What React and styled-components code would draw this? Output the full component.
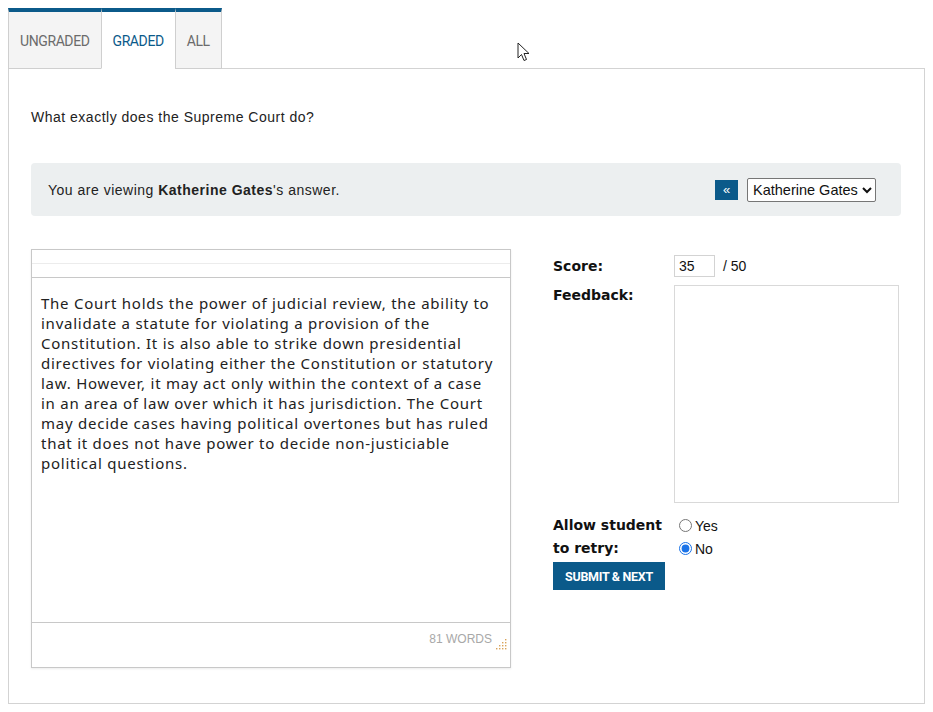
import React from 'react';
import styled, { createGlobalStyle } from 'styled-components';

const Global = createGlobalStyle`
  body {
    margin: 8px;
    background: #ffffff;
    font-family: "Liberation Sans", Arial, sans-serif;
    color: #222;
  }
`;

const BLUE = '#0b5a8a';

const Page = styled.div`
  position: relative;
  width: 917px;
`;

const Tabs = styled.div`
  display: flex;
  position: relative;
  z-index: 1;
`;

const Tab = styled.div`
  box-sizing: border-box;
  height: 61px;
  padding: 1px 11px 0;
  display: flex;
  align-items: center;
  border-top: 4px solid ${BLUE};
  border-left: 1px solid #cfcfcf;
  border-right: ${p => (p.$last ? '1px solid #cfcfcf' : 'none')};
  border-bottom: 1px solid ${p => (p.$active ? '#ffffff' : '#cfcfcf')};
  margin-bottom: -1px;
  background: ${p => (p.$active ? '#ffffff' : '#f4f4f4')};
  color: ${p => (p.$active ? BLUE : '#6b6b6b')};
  font-family: Roboto, sans-serif;
  font-size: 14px;
  letter-spacing: -0.4px;
  text-transform: uppercase;
  cursor: pointer;
`;

const Panel = styled.div`
  border: 1px solid #d3d3d3;
  padding: 40px 23px 35px 22px;
`;

const Question = styled.p`
  margin: 0;
  font-size: 14px;
  line-height: 16px;
  letter-spacing: 0.5px;
`;

const Banner = styled.div`
  margin-top: 38px;
  height: 53px;
  background: #eceff0;
  border-radius: 4px;
  display: flex;
  align-items: center;
  justify-content: space-between;
  padding: 0 25px 0 17px;
  font-size: 14px;
`;

const Viewing = styled.span`
  letter-spacing: 0.5px;
`;

const Picker = styled.div`
  display: flex;
  align-items: center;
  gap: 9px;
`;

const PrevButton = styled.button`
  width: 23px;
  height: 20px;
  border: none;
  padding: 0;
  background: ${BLUE};
  color: #fff;
  font-size: 13px;
  line-height: 20px;
  cursor: pointer;
`;

const Select = styled.select`
  height: 24px;
  font-family: "Liberation Sans", Arial, sans-serif;
  font-size: 14.5px;
  color: #111;
  border: 1px solid #767676;
  border-radius: 2px;
  background: #fff;
  padding: 0 1px;
`;

const Work = styled.div`
  margin-top: 34px;
  display: flex;
  align-items: flex-start;
  gap: 42px;
`;

const Editor = styled.div`
  width: 478px;
  height: 417px;
  border: 1px solid #c8c8c8;
  box-shadow: 0 1px 2px rgba(0, 0, 0, 0.08);
  display: flex;
  flex-direction: column;
  margin-top: -1px;
`;

const ToolRow = styled.div`
  height: 13px;
  border-bottom: 1px solid ${p => (p.$dark ? '#c8c8c8' : '#ececec')};
`;

const Answer = styled.div`
  flex: 1;
  padding: 15px 10px 0 9px;
  font-family: "Noto Sans", sans-serif;
  font-size: 15px;
  letter-spacing: 0.75px;
  line-height: 20px;
  color: #222;
`;

const Footer = styled.div`
  position: relative;
  height: 45px;
  border-top: 1px solid #c8c8c8;
  display: flex;
  justify-content: flex-end;
  padding: 9px 18px 0 0;
  box-sizing: border-box;
  font-family: "Liberation Sans", Arial, sans-serif;
  font-size: 12px;
  color: #a8a8a8;
`;

const Grip = styled.svg`
  position: absolute;
  right: 3px;
  bottom: 17px;
`;

const Form = styled.div`
  display: grid;
  grid-template-columns: 121px auto;
  align-items: start;
  font-family: "DejaVu Sans", Verdana, sans-serif;
  font-size: 14px;
  color: #111;
  padding-top: 5px;
`;

const Label = styled.div`
  font-weight: bold;
  line-height: 23px;
  margin-top: ${p => p.$top || 0}px;
`;

const ScoreCell = styled.div`
  display: flex;
  align-items: center;
  gap: 8px;
  font-family: "Liberation Sans", Arial, sans-serif;
  font-size: 14px;
`;

const ScoreInput = styled.input`
  width: 41px;
  height: 22px;
  box-sizing: border-box;
  border: 1px solid #d3d3d3;
  padding: 0 4px;
  font-family: "Liberation Sans", Arial, sans-serif;
  font-size: 14px;
  color: #111;
`;

const Feedback = styled.textarea`
  margin-top: 7px;
  width: 225px;
  height: 218px;
  box-sizing: border-box;
  border: 1px solid #d9d9d9;
  resize: none;
`;

const Radios = styled.div`
  margin-top: 11px;
  display: flex;
  flex-direction: column;
  padding-left: 5px;
`;

const RadioRow = styled.label`
  display: flex;
  align-items: center;
  gap: 3px;
  height: 23px;
  font-family: "Liberation Sans", Arial, sans-serif;
  font-size: 14px;
  input {
    margin: 0;
    width: 13px;
    height: 13px;
    accent-color: #1a73e8;
  }
`;

const Submit = styled.button`
  grid-column: 1 / span 2;
  justify-self: start;
  margin-top: 2px;
  width: 112px;
  height: 28px;
  padding: 0;
  border: none;
  background: ${BLUE};
  color: #fff;
  font-family: Roboto, sans-serif;
  font-weight: bold;
  font-size: 12.5px;
  letter-spacing: -0.3px;
  white-space: nowrap;
  text-transform: uppercase;
  cursor: pointer;
`;

const Cursor = styled.svg`
  position: absolute;
  left: 509px;
  top: 34px;
`;

const answerText =
  'The Court holds the power of judicial review, the ability to invalidate a statute for violating a provision of the Constitution. It is also able to strike down presidential directives for violating either the Constitution or statutory law. However, it may act only within the context of a case in an area of law over which it has jurisdiction. The Court may decide cases having political overtones but has ruled that it does not have power to decide non-justiciable political questions.';

const gripDots = [
  [10, 1], [10, 4], [7, 4], [10, 7], [7, 7], [4, 7], [10, 10], [7, 10], [4, 10], [1, 10],
];

export default function App() {
  return (
    <Page>
      <Global />
      <Tabs>
        <Tab>Ungraded</Tab>
        <Tab $active>Graded</Tab>
        <Tab $last>All</Tab>
      </Tabs>
      <Panel>
        <Question>What exactly does the Supreme Court do?</Question>
        <Banner>
          <Viewing>
            You are viewing <b>Katherine Gates</b>'s answer.
          </Viewing>
          <Picker>
            <PrevButton>«</PrevButton>
            <Select defaultValue="kg">
              <option value="kg">Katherine Gates</option>
            </Select>
          </Picker>
        </Banner>
        <Work>
          <Editor>
            <ToolRow />
            <ToolRow $dark />
            <Answer>{answerText}</Answer>
            <Footer>
              81 WORDS
              <Grip width="11" height="11" viewBox="0 0 11 11">
                {gripDots.map(([x, y], i) => (
                  <rect key={i} x={x - 1} y={y - 1} width="1.4" height="1.4" fill="#d9a35a" />
                ))}
              </Grip>
            </Footer>
          </Editor>
          <Form>
            <Label $top={0}>Score:</Label>
            <ScoreCell>
              <ScoreInput defaultValue="35" />
              <span>/ 50</span>
            </ScoreCell>
            <Label $top={6}>Feedback:</Label>
            <Feedback />
            <Label $top={11}>
              Allow student
              <br />
              to retry:
            </Label>
            <Radios>
              <RadioRow>
                <input type="radio" name="retry" /> Yes
              </RadioRow>
              <RadioRow>
                <input type="radio" name="retry" defaultChecked /> No
              </RadioRow>
            </Radios>
            <Submit>Submit &amp; Next</Submit>
          </Form>
        </Work>
      </Panel>
      <Cursor width="14" height="22" viewBox="0 0 14 22">
        <path d="M1 1 L1 16 L4.5 12.5 L7 18.5 L9.5 17.5 L7 11.5 L12 11.5 Z" fill="#fff" stroke="#222" strokeWidth="1" strokeLinejoin="round" />
      </Cursor>
    </Page>
  );
}
